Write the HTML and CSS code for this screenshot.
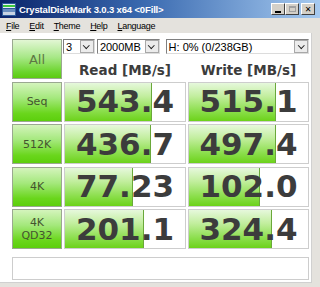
FILE: index.html
```html
<!DOCTYPE html>
<html>
  <head>
    <title>CrystalDiskMark 3.0.3 x64</title>
    <link rel="stylesheet" href="styles.css">
  </head>
  <body>
    <div class="window">
      <div class="titlebar">
        <svg class="app-icon" width="14" height="13" viewBox="0 0 14 13">
          <rect x="0" y="0" width="14" height="13" fill="#2d5d9c" />
          <rect x="1" y="1" width="12" height="4" fill="#e8f0f8" />
          <rect x="1" y="2" width="12" height="2" fill="#3cc83c" />
          <rect x="1" y="6" width="12" height="6" fill="#6a8fc0" />
          <rect x="1" y="9" width="12" height="3" fill="#c8d4e4" />
        </svg>
        <span class="title-text">CrystalDiskMark 3.0.3 x64 &lt;0Fill&gt;</span>
        <div class="win-buttons">
          <span class="win-btn"><span class="min-glyph"></span></span>
          <span class="win-btn"><span class="max-glyph"></span></span>
          <span class="win-btn close">&#x2715;</span>
        </div>
      </div>

      <div class="menubar">
        <span class="menu-item"><u>F</u>ile</span>
        <span class="menu-item"><u>E</u>dit</span>
        <span class="menu-item"><u>T</u>heme</span>
        <span class="menu-item"><u>H</u>elp</span>
        <span class="menu-item"><u>L</u>anguage</span>
      </div>

      <div class="client">
        <div class="grid">
          <div class="label-btn all-btn">All</div>
          <div class="top-area">
            <div class="combos">
              <div class="combo combo-count"><span class="combo-text">3</span><span class="combo-arrow"></span></div>
              <div class="combo combo-size"><span class="combo-text">2000MB</span><span class="combo-arrow"></span></div>
              <div class="combo combo-drive"><span class="combo-text">H: 0% (0/238GB)</span><span class="combo-arrow"></span></div>
            </div>
            <div class="headers">
              <div class="col-head">Read [MB/s]</div>
              <div class="col-head">Write [MB/s]</div>
            </div>
          </div>

          <div class="label-btn">Seq</div>
          <div class="cell"><div class="bar" style="width: 72%"></div><span class="value">543.4</span></div>
          <div class="cell"><div class="bar" style="width: 72%"></div><span class="value">515.1</span></div>

          <div class="label-btn">512K</div>
          <div class="cell"><div class="bar" style="width: 71%"></div><span class="value">436.7</span></div>
          <div class="cell"><div class="bar" style="width: 72%"></div><span class="value">497.4</span></div>

          <div class="label-btn">4K</div>
          <div class="cell"><div class="bar" style="width: 56%"></div><span class="value">77.23</span></div>
          <div class="cell"><div class="bar" style="width: 59%"></div><span class="value">102.0</span></div>

          <div class="label-btn">4K<br>QD32</div>
          <div class="cell"><div class="bar" style="width: 65%"></div><span class="value">201.1</span></div>
          <div class="cell"><div class="bar" style="width: 69%"></div><span class="value">324.4</span></div>
        </div>

        <div class="comment"></div>
      </div>
    </div>
  </body>
</html>
```

FILE: styles.css
```css
html,
body {
  margin: 0;
  padding: 0;
  background: #d4d0c8;
}

.window {
  width: 320px;
  height: 287px;
  display: flex;
  flex-direction: column;
  overflow: hidden;
  background: #e4e2dd;
  font-family: "DejaVu Sans", Verdana, sans-serif;
}

/* title bar */
.titlebar {
  height: 18px;
  display: flex;
  align-items: center;
  padding: 0 5px 0 2px;
  background: linear-gradient(to right, #0a246a 0%, #3a6ab0 45%, #a6caf0 100%);
  flex-shrink: 0;
}

.app-icon {
  margin-right: 3px;
  flex-shrink: 0;
}

.title-text {
  color: #fff;
  font-family: "Liberation Sans", Arial, sans-serif;
  font-weight: bold;
  font-size: 9.5px;
  letter-spacing: -0.15px;
  white-space: nowrap;
  flex: 1;
}

.win-buttons {
  display: flex;
}

.win-btn {
  width: 14px;
  height: 12px;
  box-sizing: border-box;
  background: #d4d0c8;
  border: 1px solid;
  border-color: #fff #404040 #404040 #fff;
  display: flex;
  align-items: center;
  justify-content: center;
  font-size: 8px;
  font-weight: bold;
  color: #000;
}

.win-btn.close {
  margin-left: 2px;
}

.min-glyph {
  width: 6px;
  height: 2px;
  background: #000;
  margin-top: 5px;
}

.max-glyph {
  width: 7px;
  height: 6px;
  box-sizing: border-box;
  border: 1px solid #a0a0a0;
  border-top-width: 2px;
}

/* menu */
.menubar {
  height: 15px;
  display: flex;
  align-items: center;
  padding: 0 0 0 6px;
  gap: 10px;
  font-family: "Liberation Sans", Arial, sans-serif;
  font-size: 9px;
  letter-spacing: -0.3px;
  color: #000;
  flex-shrink: 0;
}

/* client */
.client {
  flex: 1;
  background: #fff;
  margin: 0 8px 4px 0;
  border-right: 1px solid #d0d0d0;
  border-bottom: 1px solid #d0d0d0;
  padding: 6px 0 0 12px;
}

.grid {
  display: grid;
  grid-template-columns: 50px 122px 121px;
  grid-template-rows: 40px repeat(4, 40px);
  column-gap: 2px;
  row-gap: 2.5px;
}

.label-btn {
  box-sizing: border-box;
  border: 1px solid #9aa890;
  background: linear-gradient(to bottom, #d4f4bc 0%, #a4e87c 40%, #6ad61c 80%, #5ccf0c 100%);
  display: flex;
  align-items: center;
  justify-content: center;
  text-align: center;
  font-size: 11px;
  line-height: 13px;
  color: #44542f;
}

.all-btn {
  font-size: 13px;
  color: #5e7644;
  background: linear-gradient(to bottom, #e2f6d4 0%, #a8e888 45%, #6ad42a 85%, #5ccb10 100%);
}

.top-area {
  grid-column: 2 / 4;
  display: flex;
  flex-direction: column;
}

.combos {
  display: flex;
  margin-left: -1px;
  height: 15px;
}

.combo {
  box-sizing: border-box;
  height: 15px;
  border: 1px solid #7f7f7f;
  border-right-color: #dcdcdc;
  border-bottom-color: #dcdcdc;
  background: #fff;
  display: flex;
  align-items: center;
  font-family: "Liberation Sans", Arial, sans-serif;
  font-size: 11px;
  color: #000;
}

.combo-text {
  flex: 1;
  padding-left: 2px;
  white-space: nowrap;
}

.combo-arrow {
  width: 14px;
  height: 13px;
  box-sizing: border-box;
  border: 1px solid #a8a8a8;
  background: #ececec;
  position: relative;
}

.combo-arrow::after {
  content: "";
  position: absolute;
  left: 3.5px;
  top: 2px;
  width: 3.5px;
  height: 3.5px;
  border-right: 1.5px solid #222;
  border-bottom: 1.5px solid #222;
  transform: rotate(45deg);
}

.combo-count {
  width: 32px;
}

.combo-size {
  width: 63px;
  margin-left: 2px;
}

.combo-drive {
  width: 144px;
  margin-left: 6px;
}

.headers {
  display: grid;
  grid-template-columns: 122px 121px;
  column-gap: 2px;
  margin-top: 8px;
}

.col-head {
  text-align: center;
  font-weight: bold;
  font-size: 13.5px;
  color: #3c3c3c;
  white-space: nowrap;
}

.cell {
  position: relative;
  box-sizing: border-box;
  border: 1px solid #cdcdcd;
  background: #fff;
  display: flex;
  align-items: center;
  justify-content: center;
  overflow: hidden;
}

.bar {
  position: absolute;
  left: 0;
  top: 0;
  bottom: 0;
  background: linear-gradient(to bottom, #e6f8dc 0%, #c2ee9e 35%, #8ade4a 75%, #6cd21a 100%);
  border-right: 1px solid #6aa83a;
}

.value {
  position: relative;
  font-weight: bold;
  font-size: 31px;
  color: #3c3c3c;
  line-height: 1;
}

.comment {
  box-sizing: border-box;
  width: 297px;
  height: 23px;
  margin-top: 8px;
  border: 1px solid #cdcdcd;
  background: #fff;
}
```
